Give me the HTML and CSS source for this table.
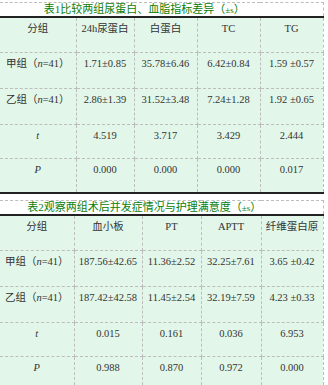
FILE: index.html
```html
<!DOCTYPE html>
<html lang="zh-CN">
<head>
  <meta charset="UTF-8" />
  <title>表格</title>
  <link rel="stylesheet" href="styles.css">
</head>
<body>

  <!-- 表1 -->
  <table class="data-table t1">
    <colgroup>
      <col class="c1"><col class="c2"><col class="c3"><col class="c4"><col class="c5">
    </colgroup>
    <tr class="title-row">
      <td colspan="5">表1比较两组尿蛋白、血脂指标差异（<span class="small">±s</span>）</td>
    </tr>
    <tr class="head-row">
      <td>分组</td><td>24h尿蛋白</td><td>白蛋白</td><td>TC</td><td>TG</td>
    </tr>
    <tr class="r1">
      <td>甲组（<i>n</i>=41）</td><td>1.71±0.85</td><td>35.78±6.46</td><td>6.42±0.84</td><td>1.59 ±0.57</td>
    </tr>
    <tr class="r2">
      <td>乙组（<i>n</i>=41）</td><td>2.86±1.39</td><td>31.52±3.48</td><td>7.24±1.28</td><td>1.92 ±0.65</td>
    </tr>
    <tr class="r3">
      <td><i>t</i></td><td>4.519</td><td>3.717</td><td>3.429</td><td>2.444</td>
    </tr>
    <tr class="r4">
      <td><i>P</i></td><td>0.000</td><td>0.000</td><td>0.000</td><td>0.017</td>
    </tr>
  </table>

  <!-- 表2 -->
  <table class="data-table t2">
    <colgroup>
      <col class="c1"><col class="c2"><col class="c3"><col class="c4"><col class="c5">
    </colgroup>
    <tr class="title-row">
      <td colspan="5">表2观察两组术后并发症情况与护理满意度（<span class="small">±s</span>）</td>
    </tr>
    <tr class="head-row">
      <td>分组</td><td>血小板</td><td>PT</td><td>APTT</td><td>纤维蛋白原</td>
    </tr>
    <tr class="r1">
      <td>甲组（<i>n</i>=41）</td><td>187.56±42.65</td><td>11.36±2.52</td><td>32.25±7.61</td><td>3.65 ±0.42</td>
    </tr>
    <tr class="r2">
      <td>乙组（<i>n</i>=41）</td><td>187.42±42.58</td><td>11.45±2.54</td><td>32.19±7.59</td><td>4.23 ±0.33</td>
    </tr>
    <tr class="r3">
      <td><i>t</i></td><td>0.015</td><td>0.161</td><td>0.036</td><td>6.953</td>
    </tr>
    <tr class="r4">
      <td><i>P</i></td><td>0.988</td><td>0.870</td><td>0.972</td><td>0.000</td>
    </tr>
  </table>

</body>
</html>
```

FILE: styles.css
```css
body {
  margin: 0;
  padding: 2px 0 0 0;
  background: #fff;
  font-family: "Liberation Serif", "Noto Sans CJK SC", serif;
  font-size: 10.5px;
  color: #333;
}

.data-table {
  width: 323px;
  border-collapse: collapse;
  table-layout: fixed;
  margin-bottom: 6px;
}

.data-table td {
  padding: 4px 1px 0;
  line-height: 13px;
  text-align: center;
  vertical-align: top;
  white-space: nowrap;
  border-right: 1px dashed #bdbdbd;
  border-bottom: 1px dashed #bdbdbd;
  background: #e2f7e9;
}

.title-row td {
  background: #fff;
  border-top: 1px dashed #bdbdbd;
  border-bottom: 2px solid #222;
  height: 12px;
  padding: 0 34px 0 0;
  line-height: 12px;
  font-size: 11px;
  color: #0a7d0a;
}

.title-row .small {
  font-size: 9px;
}

.head-row td { height: 30px; }
.r1 td { height: 31px; }
.r2 td { height: 31px; }
.r3 td { height: 29px; }
.r4 td {
  height: 29px;
  border-bottom: 2px solid #222;
}

.t1 .c1 { width: 76px; }
.t1 .c2 { width: 58px; }
.t1 .c3 { width: 63px; }
.t1 .c4 { width: 63px; }
.t1 .c5 { width: 63px; }

.t2 .c1 { width: 74px; }
.t2 .c2 { width: 68px; }
.t2 .c3 { width: 59px; }
.t2 .c4 { width: 60px; }
.t2 .c5 { width: 62px; }
```
